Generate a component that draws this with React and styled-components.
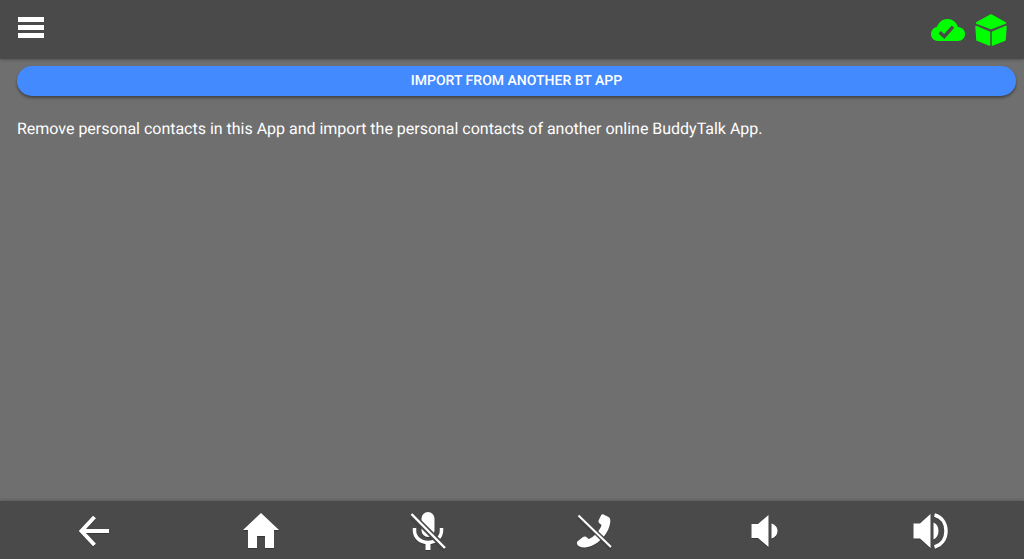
import React from "react";
import styled, { createGlobalStyle } from "styled-components";

const Global = createGlobalStyle`
  html, body { margin: 0; padding: 0; height: 100%; background: #6f6f6f; }
  #root { height: 100%; }
`;
const Page = styled.div`
  width: 1024px; height: 559px; display: flex; flex-direction: column; overflow: hidden;
  background: #6f6f6f; font-family: Roboto, "Liberation Sans", sans-serif; color: #fff;
  text-rendering: geometricPrecision;
`;
const Header = styled.header`
  height: 59px; flex: none; background: #4a4a4a; display: flex; justify-content: space-between; align-items: flex-start;
  box-shadow: 0 1px 3px rgba(0,0,0,.25);
`;
const MenuButton = styled.button`
  border: 0; background: none; padding: 0; margin: 17px 0 0 18px; display: block;
  svg { display: block; }
`;
const Status = styled.div`
  display: flex; align-items: flex-start; gap: 10px; padding: 14px 17px 0 0;
`;
const CloudWrap = styled.div`padding-top: 5px;`;
const Content = styled.main`
  flex: 1; padding: 7px 8px 0 17px; display: flex; flex-direction: column;
`;
const ImportButton = styled.button`
  height: 30px; border: 0; border-radius: 15px; background: #448aff; color: #fff;
  font: 500 14px/30px Roboto, sans-serif; letter-spacing: 0; padding: 0;
  box-shadow: 0 2px 3px rgba(0,0,0,.4); text-transform: uppercase; text-rendering: geometricPrecision;
`;
const Description = styled.p`
  margin: 23px 0 0; font-size: 16px; line-height: 20px; font-weight: 400; letter-spacing: -0.015px;
`;
const Footer = styled.footer`
  box-sizing: border-box; height: 58px; flex: none; background: #4a4a4a; display: grid;
  grid-template-columns: repeat(6, 167px); padding: 1px 0 0 10px; align-items: center; justify-items: center;
  box-shadow: 0 -1px 3px rgba(0,0,0,.2);
`;
const NavButton = styled.button`
  border: 0; background: none; padding: 0; display: flex; width: 44px; height: 44px; align-items: center; justify-content: center;
  svg { display: block; filter: drop-shadow(0 1px 0 rgba(0,0,0,.25)); }
`;

const Menu = () => (
  <svg width="26" height="21" viewBox="0 0 26 21" fill="#fff">
    <rect y="0" width="26" height="5" />
    <rect y="8" width="26" height="5" />
    <rect y="16" width="26" height="5" />
  </svg>
);
const Cloud = () => (
  <svg width="34" height="22" viewBox="0 0 34 22">
    <path fill="#00ff00" d="M7 22C3 22 0 19 0 15C0 11.500 2.500 8.500 6 8C7.500 3.500 11.500 0 16.500 0C21.500 0 25.500 3.200 26.800 8C31 8.300 34 11 34 15C34 19 31 22 27 22Z" />
    <path fill="none" stroke="#4a4a4a" strokeWidth="3.400" d="M8.700 13.300L13.300 17.500L22 7.700" />
  </svg>
);
const Cube = () => (
  <svg width="32" height="32" viewBox="0 0 32 32" fill="#00ff00" stroke="#00ff00" strokeWidth="1.500" strokeLinejoin="round">
    <path d="M16 1L30.500 9 16 14.500 1.500 9Z" />
    <path d="M1 12.500L14.500 18.200V31L2 26Z" />
    <path d="M31 12.500L17.500 18.200V31L30 26Z" />
  </svg>
);
const Back = () => (
  <svg width="32" height="32" viewBox="0 0 32 32" fill="none" stroke="#fff" strokeWidth="4">
    <path d="M31 16H4" />
    <path d="M16.500 2L3.500 16l13 14" />
  </svg>
);
const Home = () => (
  <svg width="36" height="35" viewBox="0 0 36 35" fill="#fff">
    <path d="M18 0L36 17H31V35H22V23H14V35H5V17H0Z" />
  </svg>
);
const MicOff = () => (
  <svg width="36" height="40" viewBox="0 0 36 40">
    <rect x="11.500" y="1" width="13" height="25" rx="6.500" fill="#fff" />
    <path d="M4.500 17v2.500c0 7 6 12 13.500 12s13.500-5 13.500-12V17" fill="none" stroke="#fff" strokeWidth="3.500" />
    <path d="M18 31v8" stroke="#fff" strokeWidth="5" />
    <path d="M1 3L35 37" stroke="#4a4a4a" strokeWidth="6" />
    <path d="M1.500 3L35 37" stroke="#fff" strokeWidth="2.400" />
  </svg>
);
const PhoneOff = () => (
  <svg width="36" height="36" viewBox="6.500 5 36 36">
    <path fill="#fff" d="M33 6.500L38 9C39.500 10 39.800 11 39.800 13C39.500 24 29 37 16 39.300C11 40 7.500 38.500 6.500 36C6 34.800 6.300 34 7.500 33L12.500 29C14 28 15.500 28.300 16.500 29.500L18 31C23 29.500 30 22 31 17L29 15.500C28 14.500 27.800 13.500 28.200 12.300L30.500 7.500C31 6.500 32 6 33 6.500Z" />
    <path d="M8 7.500L40.500 39" stroke="#4a4a4a" strokeWidth="5" />
    <path d="M8 7.500L40.500 39" stroke="#fff" strokeWidth="2" />
  </svg>
);
const VolumeLow = () => (
  <svg width="26" height="32" viewBox="-2.500 0 26 32" fill="#fff" style={{ overflow: "visible" }}>
    <path d="M0 9H6.500L17 0V32L6.500 23H0Z" />
    <path d="M20 8.500c3.500 1 6 4 6 7.500s-2.500 6.500-6 7.500Z" />
  </svg>
);
const VolumeHigh = () => (
  <svg width="36" height="36" viewBox="-2.500 0 36 36" fill="none" style={{ overflow: "visible" }}>
    <path fill="#fff" d="M0 10.500H6.500L17 1V35L6.500 25.500H0Z" />
    <path fill="#fff" d="M20 9.500c3 1.200 5 4.300 5 8.500s-2 7.300-5 8.500Z" />
    <path stroke="#fff" strokeWidth="3.500" d="M21 2c7.500 2 11.500 8.500 11.500 16s-4 14-11.500 16" />
  </svg>
);

export default function App() {
  return (
    <Page>
      <Global />
      <Header>
        <MenuButton aria-label="Menu"><Menu /></MenuButton>
        <Status>
          <CloudWrap><Cloud /></CloudWrap>
          <Cube />
        </Status>
      </Header>
      <Content>
        <ImportButton>Import from another BT App</ImportButton>
        <Description>
          Remove personal contacts in this App and import the personal contacts of another online BuddyTalk App.
        </Description>
      </Content>
      <Footer>
        <NavButton aria-label="Back"><Back /></NavButton>
        <NavButton aria-label="Home"><Home /></NavButton>
        <NavButton aria-label="Microphone off"><MicOff /></NavButton>
        <NavButton aria-label="Hang up"><PhoneOff /></NavButton>
        <NavButton aria-label="Volume down"><VolumeLow /></NavButton>
        <NavButton aria-label="Volume up"><VolumeHigh /></NavButton>
      </Footer>
    </Page>
  );
}
